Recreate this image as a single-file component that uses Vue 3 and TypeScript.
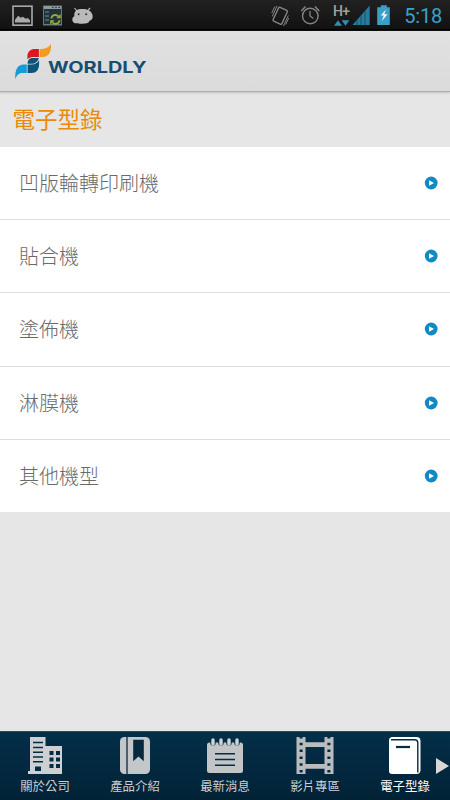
<script setup lang="ts">
interface Tab { id: string; label: string; active?: boolean }

const machines: string[] = ['凹版輪轉印刷機', '貼合機', '塗佈機', '淋膜機', '其他機型']
const tabs: Tab[] = [
  { id: 'company', label: '關於公司' },
  { id: 'products', label: '產品介紹' },
  { id: 'news', label: '最新消息' },
  { id: 'videos', label: '影片專區' },
  { id: 'catalog', label: '電子型錄', active: true },
]
</script>

<template>
  <div class="screen">
    <div class="status">
      <svg class="status-left" viewBox="0 0 100 31">
        <rect x="13" y="6.2" width="19" height="19" fill="#1c1c1c" stroke="#aaa" stroke-width="1.6" />
        <path d="M15 22.5v-2.8l3.2-4 2.6 2 2-1 3 2 2-.7 2.2 2.3v2.2z" fill="#aaa" />
        <rect x="43" y="5.5" width="19" height="20" fill="#68797e" />
        <path d="M44 9h17v15H44z" fill="#233238" />
        <path d="M44 6h17v3H44z" fill="#8c9b9f" />
        <path d="M52 7.4h1.6M55.2 7.4h1.6M58.4 7.4H60" stroke="#2e3c41" stroke-width="1.4" />
        <path d="M45 12h4M45 16h4M45 20h4" stroke="#47616b" stroke-width="2" />
        <path d="M51.3 18.5a4 4 0 0 1 7-2.1M59.5 20.2a4 4 0 0 1-7 2.3" fill="none" stroke="#99ad31" stroke-width="1.8" />
        <path d="M60.7 14v4.3h-4.3zM50.2 24.8v-4.5h4.4z" fill="#99ad31" />
        <path d="M74.5 8l2.4 3M90.1 7.8l-2.7 3.2" stroke="#bababa" stroke-width="1.2" />
        <path d="M76.3 10.3c2.6-1.7 9.2-1.8 12.2 0 2.4 1 4.5 4 4.2 6.8-.2 2.2-1.5 3.3-3.2 3.7-.5 2.2-2.6 3-5.2 2.7-2.2.4-4.2.4-6.4-.3-3.5.6-5.8-1.1-5.6-3.8.1-1.6.9-2.4 2-3.1-.3-2.4.4-4.7 2-6z" fill="#bababa" />
        <circle cx="78.6" cy="14.2" r="1" fill="#333" />
        <circle cx="86.2" cy="14.2" r="1" fill="#333" />
      </svg>
      <svg class="status-right" viewBox="260 0 190 31">
        <g fill="none" stroke="#858585">
          <rect x="275.4" y="8.2" width="9.6" height="15.2" rx="1.2" transform="rotate(25 280.2 15.8)" stroke-width="1.4" />
          <path d="M274.8 6.5l-3 6.5M277 6l-4.8 10.5M285.7 24.5l3-6.5M283.5 26l4.8-10.5" stroke-width="1" />
          <circle cx="310.3" cy="16" r="7.8" stroke-width="1.4" />
          <path d="M310 11v5l3.4 2.5" stroke-width="1.3" />
          <path d="M301.3 11l4.2-4.5M319.2 11L315 6.5" stroke-width="1.5" />
        </g>
        <text x="333" y="16.3" class="network" textLength="17">H+</text>
        <path d="M334 25.8l4-5.6 4 5.6zM341.6 20.2h7.8l-3.9 5.6z" fill="#318fb3" />
        <path d="M369.7 5.5v19.4h-17.2z" fill="#277c9e" />
        <path d="M357 19v6M361 15v10M365 10v15" stroke="#164355" stroke-width=".8" />
        <path d="M380.8 5.2h6v2h3v17.7h-12.6V7.2h3.6z" fill="#3a9fc4" />
        <path d="M385.8 9.5l-5 6h3l-2 5.8 5.7-7h-3.2z" fill="#effaff" />
        <text x="404.2" y="23.3" class="time" textLength="38">5:18</text>
      </svg>
    </div>

    <header class="brand">
      <svg viewBox="0 31 160 60" aria-label="WORLDLY">
        <path d="M27.4 59.3v-2.8c0-5 3.2-7.5 7.6-7.5h3.9v7.9h-4.6c-3.3 0-5.3.6-6.9 2.4z" fill="#dc1721" />
        <path d="M39.7 49c5.1 0 8.8-.9 11.3-5.2.5 8.7-2.4 13.1-8.2 13.1h-3.1z" fill="#f09c1c" />
        <path d="M27.6 73v-8.5h4c3.6 0 6-1.3 7.5-4.4v3.7c0 6.2-2.8 9.2-7.7 9.2z" fill="#0d537a" />
        <path d="M27.6 63.8c-.1-4 2-5.9 5.4-5.9h5.9c-1.2 3.7-3.8 5.9-7.5 5.9z" fill="#0d537a" />
        <path d="M15.3 79.3c-.6-9.8 2.5-14.8 8.3-14.8h3.2V73H23c-4 0-6.1 1.6-7.7 6.3z" fill="#169bd7" />
        <text x="48" y="72.7" class="wordmark" textLength="98.5" lengthAdjust="spacingAndGlyphs">WORLDLY</text>
      </svg>
    </header>

    <h1 class="heading">電子型錄</h1>

    <ul class="machines">
      <li v-for="name in machines" :key="name">
        <span>{{ name }}</span>
        <svg class="go" viewBox="0 0 14 14">
          <circle cx="7.2" cy="7" r="6.4" fill="#1389c4" />
          <path d="M5 4.2L10 7 5 9.8z" fill="#fff" />
        </svg>
      </li>
    </ul>

    <nav class="tabs">
      <div v-for="tab in tabs" :key="tab.id" class="tab" :class="{ active: tab.active }">
        <svg class="icon" viewBox="0 0 40 38">
          <g v-if="tab.id === 'company'">
            <path d="M5 0h15.5v9H37v28H3v-3h2z" fill="#ccd0d2" />
            <path d="M8 5.5h10M8 10.5h10M8 15.2h10M8 20h10M8 24.7h10" stroke="#042b43" stroke-width="1.5" />
            <path d="M10 29.5h6V34h-6zM24.5 14h4v4h-4zm6.5 0h4v4h-4zm-6.5 6.5h4v4h-4zm6.5 0h4v4h-4zM24.5 27h4v4h-4zm6.5 0h4v4h-4z" fill="#042b43" />
          </g>
          <g v-else-if="tab.id === 'products'">
            <rect x="5" y="0" width="30" height="37" rx="4.5" fill="#c4c7c9" />
            <path d="M12 0v37" stroke="#06293e" stroke-width="1.3" />
            <path d="M18.2 2.8h10.6v21.4l-5.3-4.6-5.3 4.6z" fill="#06293e" />
          </g>
          <g v-else-if="tab.id === 'news'">
            <rect x="2" y="5.5" width="36" height="30.5" rx="2.5" fill="#c1c5c7" />
            <g v-for="x in [8, 16, 24, 32]" :key="x">
              <circle :cx="x" cy="6" r="2.7" fill="#05283c" />
              <path :d="`M${x} 7V3`" stroke="#d1d4d5" stroke-width="3.4" stroke-linecap="round" />
            </g>
            <path d="M10 16.7h20M10 22.5h20M10 28.3h20" stroke="#082c42" stroke-width="1.6" />
          </g>
          <g v-else-if="tab.id === 'videos'">
            <path d="M1.5 0h9v5.3h19V0h9v37h-9v-5.2h-19V37h-9zM10.5 10v17h19V10z" fill-rule="evenodd" fill="#b8bcbf" />
            <path d="M6.1 0v37M33.9 0v37" stroke="#06283c" stroke-width="3" stroke-dasharray="2.5 4.3" stroke-dashoffset="1" />
          </g>
          <g v-else>
            <path d="M7.5 0H31.5q4 0 4 4v29q0 4-4 4H7q-3 0-3-3V3.5Q4 0 7.5 0z" fill="#fff" />
            <path d="M6 2.7H29.5q3.3 0 3.3 3.3v29.4" fill="none" stroke="#062a40" stroke-width="1.4" />
            <path d="M11 10h14" stroke="#062a40" stroke-width="2.2" />
          </g>
        </svg>
        <span class="label">{{ tab.label }}</span>
      </div>
      <svg class="more" viewBox="0 0 15 18">
        <path d="M1 1l13 8-13 8z" fill="#d8d8d8" />
      </svg>
    </nav>
  </div>
</template>

<style>
body { margin: 0; overflow: hidden; }
</style>

<style scoped>
.screen { width: 450px; height: 800px; display: flex; flex-direction: column; background: #e6e6e6; font-family: "Noto Sans CJK TC", sans-serif; overflow: hidden; }
svg { display: block; }
.status { height: 31px; flex: none; display: flex; justify-content: space-between; background: linear-gradient(#212121, #111 95%, #000 95%); }
.status-left { width: 100px; height: 31px; }
.status-right { width: 190px; height: 31px; }
.network { font: 500 14px Roboto, sans-serif; fill: #a3a3a3; }
.time { font: 400 20px Roboto, sans-serif; fill: #3ba1ca; }
.brand { height: 61px; flex: none; box-sizing: border-box; background: linear-gradient(#e1e1e1, #dbdbdb); border-bottom: 1px solid #adadad; box-shadow: 0 1px 2px #c2c2c2; }
.brand svg { width: 160px; height: 60px; }
.wordmark { font: 700 15.5px Inter, sans-serif; fill: #164e72; }
.heading { height: 55px; flex: none; margin: 0; padding-left: 12.5px; box-sizing: border-box; font-size: 22.5px; line-height: 53px; font-weight: 400; color: #e98a0b; }
.machines { margin: 0; padding: 0; list-style: none; height: 365px; flex: none; display: grid; grid-template-rows: 73px 73px 74px 73px 72px; background: #fff; }
.machines li { box-sizing: border-box; padding: 0 12px 1px 19px; display: flex; align-items: center; justify-content: space-between; border-bottom: 1px solid #dedede; color: #6a6a6a; font-size: 20px; font-weight: 300; line-height: 30px; }
.machines li:last-child { border-bottom: 0; padding-bottom: 0; }
.go { width: 14px; height: 14px; }
.tabs { height: 69px; flex: none; margin-top: auto; position: relative; box-sizing: border-box; padding-top: 5px; border-top: 1px solid #344855; display: grid; grid-template-columns: repeat(5, 1fr); background: linear-gradient(#032f49, #022236); }
.tab { display: flex; flex-direction: column; align-items: center; color: #cbd0d4; }
.tab.active { color: #fff; }
.icon { width: 40px; height: 38px; }
.label { font-size: 12.4px; line-height: 18px; margin-top: 2px; white-space: nowrap; }
.more { position: absolute; right: 0; top: 25px; width: 15px; height: 18px; }
</style>
